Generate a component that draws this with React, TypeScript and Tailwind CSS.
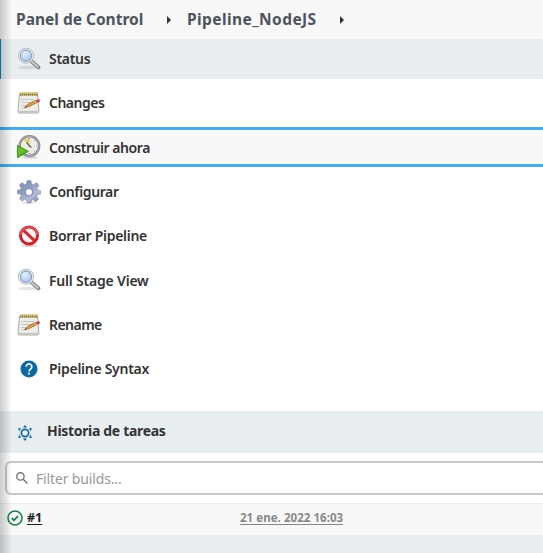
import React from "react";

function Magnifier() {
  return (
    <svg width="24" height="24" viewBox="0 0 24 24" fill="none">
      <defs>
        <radialGradient id="lens" cx="40%" cy="30%" r="75%">
          <stop offset="0" stopColor="#e4eefb" />
          <stop offset="1" stopColor="#a3c2ea" />
        </radialGradient>
      </defs>
      <ellipse cx="10" cy="20.5" rx="9" ry="1.8" fill="#000" opacity=".1" />
      <path d="M14.5 14.3l6.8 6" stroke="#858585" strokeWidth="4" strokeLinecap="round" />
      <path d="M14.5 14.3l6.3 5.5" stroke="#c9c9c9" strokeWidth="2" strokeLinecap="round" />
      <circle cx="9" cy="8.7" r="6.8" fill="url(#lens)" stroke="#b0b3b5" strokeWidth="2.4" />
      <circle cx="9" cy="8.7" r="6.7" stroke="#e7e9ea" strokeWidth="1.2" />
      <circle cx="9" cy="8.7" r="5.5" stroke="#6488c0" strokeWidth=".7" />
    </svg>
  );
}

function Notepad() {
  return (
    <svg width="24" height="24" viewBox="0 0 24 24" fill="none">
      <path d="M2.5 3h18l1.4 17.5q0 1.5-1.5 1.5H2.3Q.9 22 1 20.5z" fill="#ededeb" stroke="#aaa9a4" />
      <path d="M1.4 20.6h20" stroke="#c5c4c0" strokeWidth="1.6" />
      <path d="M4 8.5h13M4 11.5h11M4 14.5h7M4 17h5" stroke="#c4c4c4" strokeWidth=".9" />
      <path d="M3 3.2h18" stroke="#8d7d2c" strokeWidth="3.2" strokeDasharray="1.4 .6" />
      <path d="M3 2.3h18" stroke="#d6c35b" strokeWidth="1.4" strokeDasharray="1.4 .6" />
      <path d="M7.6 16.6l3.2-3.3 8-3.9 1.1 2.1-8.2 4.2z" fill="#e2a044" stroke="#99641f" strokeWidth=".8" />
      <path d="M7.6 16.6l2-.3-.9-1z" fill="#333" />
      <path d="M18.8 9.6l2.6-1.3q1.7-.1 1.6 1.9l-3 1.5z" fill="#d83b2d" />
      <path d="M18.2 9.9l1.1 2" stroke="#ddd" strokeWidth=".8" />
    </svg>
  );
}

function ClockPlay() {
  return (
    <svg width="24" height="24" viewBox="0 0 24 24" fill="none">
      <ellipse cx="13" cy="22.3" rx="8" ry="1.2" fill="#000" opacity=".15" />
      <circle cx="12.4" cy="11" r="9.8" fill="#ecece6" stroke="#85828f" strokeWidth="2.3" />
      <circle cx="12.4" cy="11" r="9.8" stroke="#b7b4c0" strokeWidth=".8" />
      <path d="M12.4 11L6.7 5.1Q9 3 12.4 3z" fill="#e6cb60" />
      <path d="M12.4 11L9.6 7.5M12.4 11l2 1.3" stroke="#49402c" strokeWidth="1.1" />
      <path d="M12.4 3v1M20.3 11h-1M12.4 19v-1M18 5.4l-.6.6M18 16.6l-.6-.6" stroke="#777" strokeWidth=".9" />
      <path d="M.5 10.3l10.9 6.1L.5 22.8z" fill="#4fb51b" stroke="#388b14" strokeWidth=".8" />
      <path d="M1.4 12.1l7.2 4.1-7.2 3z" fill="#66c62f" />
    </svg>
  );
}

function Gear() {
  return (
    <svg width="24" height="24" viewBox="0 0 24 24" fill="none">
      <defs>
        <linearGradient id="gear" x1="0" y1="0" x2=".8" y2="1">
          <stop offset="0" stopColor="#7789b2" />
          <stop offset=".45" stopColor="#909dc2" />
          <stop offset=".75" stopColor="#b4bcd8" />
          <stop offset="1" stopColor="#7985aa" />
        </linearGradient>
      </defs>
      <ellipse cx="12" cy="22.5" rx="7.5" ry="1" fill="#000" opacity=".13" />
      <path fillRule="evenodd" d="M10 .5h4l.7 3.6 1.7.7 3.1-2.2 2.6 2.7-2.1 3.1.7 1.6 3 .5v3.6l-3.2.6-.7 1.7 1.8 2.6-2.7 2.7-2.8-1.9-1.5.6L14 23h-4l-.7-3-1.5-.6L5 21.3l-2.7-2.7 1.9-2.7-.7-1.6-3.2-.6V10l3.2-.5.7-1.7L2.3 5.3 5 2.6l2.7 2.2 1.6-.7zM12 8.8a3.3 3.3 0 1 0 0 6.6 3.3 3.3 0 0 0 0-6.6z" fill="url(#gear)" stroke="#7582a8" strokeWidth=".4" />
      <circle cx="12" cy="12.1" r="4" stroke="#7683a9" strokeWidth=".7" />
    </svg>
  );
}

function Forbidden() {
  return (
    <svg width="24" height="24" viewBox="0 0 24 24" fill="none">
      <ellipse cx="12" cy="21.7" rx="8" ry="1.4" fill="#000" opacity=".16" />
      <circle cx="12" cy="11.5" r="8.5" fill="#f7f5f5" stroke="#cf1f26" strokeWidth="3" />
      <path d="M6 5.8l12 11.4" stroke="#d9292e" strokeWidth="3" />
      <path d="M3.8 11a8.2 8.2 0 0 1 16.4 0" stroke="#eb6263" strokeWidth="1.2" />
    </svg>
  );
}

function Help() {
  return (
    <svg width="24" height="24" viewBox="0 0 24 24">
      <circle cx="12" cy="12" r="8.5" fill="#0b6aa2" />
      <path d="M9.2 9.8a2.8 2.8 0 1 1 4.6 2.1c-1.1.9-1.8 1.4-1.8 2.6" fill="none" stroke="#fff" strokeWidth="1.7" />
      <path d="M11.1 15.8h1.8v1.8h-1.8z" fill="#fff" />
    </svg>
  );
}

const tasks = [
  { label: "Status", icon: Magnifier, text: "pb-px tracking-[-0.3px]" },
  { label: "Changes", icon: Notepad, text: "pb-px tracking-[-0.5px]" },
  { label: "Construir ahora", icon: ClockPlay, text: "pt-px tracking-[-0.44px]" },
  { label: "Configurar", icon: Gear, text: "pb-px tracking-[-0.38px]" },
  { label: "Borrar Pipeline", icon: Forbidden, text: "pb-px tracking-[-0.28px]" },
  { label: "Full Stage View", icon: Magnifier, text: "pt-px tracking-[-0.2px]" },
  { label: "Rename", icon: Notepad, text: "pb-px tracking-[-0.54px]" },
  { label: "Pipeline Syntax", icon: Help, text: "pb-px tracking-[-0.28px]" },
];

const rowStyle = (i: number) =>
  i === 0
    ? "border-l border-[#0b85d2] bg-[#e9eef1] pl-4"
    : i === 2
      ? "-mt-px mb-px border-y-3 border-[#40aef5] bg-[#f8f8f8] pl-[17px]"
      : "pl-[17px]";

function Arrow() {
  return (
    <svg width="4" height="8" viewBox="0 0 4 8">
      <path d="M0 0l4 4-4 4z" fill="#333" />
    </svg>
  );
}

export default function App() {
  return (
    <div className="relative h-[553px] w-full overflow-hidden bg-white font-['Noto_Sans',sans-serif] text-[#333]">
      <header className="flex h-[39px] items-center bg-[#f8f8f8] pl-4 text-[15.5px] font-bold text-[#4d545d]">
        <span className="w-[151px] whitespace-nowrap">Panel de Control</span>
        <Arrow />
        <span className="ml-4 w-[153px] tracking-[0.42px] whitespace-nowrap">Pipeline_NodeJS</span>
        <Arrow />
      </header>

      <nav className="flex h-[350px] flex-col justify-between">
        {tasks.map(({ label, icon: Icon, text }, i) => (
          <a key={label} className={`flex h-10 items-center gap-2 text-[14px] font-semibold ${rowStyle(i)}`}>
            <Icon />
            <span className={`whitespace-nowrap ${text}`}>{label}</span>
          </a>
        ))}
      </nav>

      <section className="mt-[22px]">
        <h2 className="flex h-[42px] items-center bg-[#e9eef1] pl-[18px] text-[14px] font-bold">
          <svg className="mt-0.5" width="14" height="16" viewBox="0 0 14 16" fill="#0b6aa2">
            <circle cx="7" cy="8" r="3.6" fill="none" stroke="#0b6aa2" strokeWidth="1.7" />
            <path d="M5 2.5L7 .1l2 2.4zM5 13.5l2 2.4 2-2.4zM.1 3l3.1.5-1.9 2.7zM13.9 3l-3.1.5 1.9 2.7zM.1 13l3.1-.5-1.9-2.7zM13.9 13l-3.1-.5 1.9-2.7z" />
          </svg>
          <span className="ml-[15px] pb-[3px] tracking-[-0.32px] whitespace-nowrap">Historia de tareas</span>
        </h2>
        <div className="mt-2 -mr-2 ml-[5px] flex h-[34px] items-center rounded-md border-2 border-[#c8c8c8] bg-white pl-[9px]">
          <svg width="12" height="12" viewBox="0 0 12 12" fill="none" stroke="#777" strokeWidth="1.4">
            <circle cx="4.4" cy="4.4" r="3.7" />
            <path d="M7.2 7.2l4.2 4.2" />
          </svg>
          <span className="ml-2 text-[14px] tracking-[-0.15px] text-[#999]">Filter builds...</span>
        </div>
        <div className="mt-2 flex h-8 items-center border-t border-[#e9eef1] bg-[#f8f8f8] pl-[7px]">
          <svg className="-mt-1" width="16" height="16" viewBox="0 0 16 16" fill="none" stroke="#168447">
            <circle cx="8" cy="8" r="7" strokeWidth="1.6" />
            <path d="M4.7 8.1l2.3 2.1 4-4" strokeWidth="1.9" />
          </svg>
          <a className="ml-1 w-[213px] pb-[3px] text-[12.5px] font-bold text-[#222] underline underline-offset-2">#1</a>
          <a className="pb-[3px] text-[11.5px] font-bold tracking-[0.04px] whitespace-nowrap text-[#888] underline underline-offset-2">21 ene. 2022 16:03</a>
        </div>
        <div className="h-[18px] bg-[#e9eef1]" />
      </section>

      <div className="pointer-events-none absolute inset-y-0 left-0 w-3 bg-linear-to-r from-black/20 to-transparent" />
    </div>
  );
}
